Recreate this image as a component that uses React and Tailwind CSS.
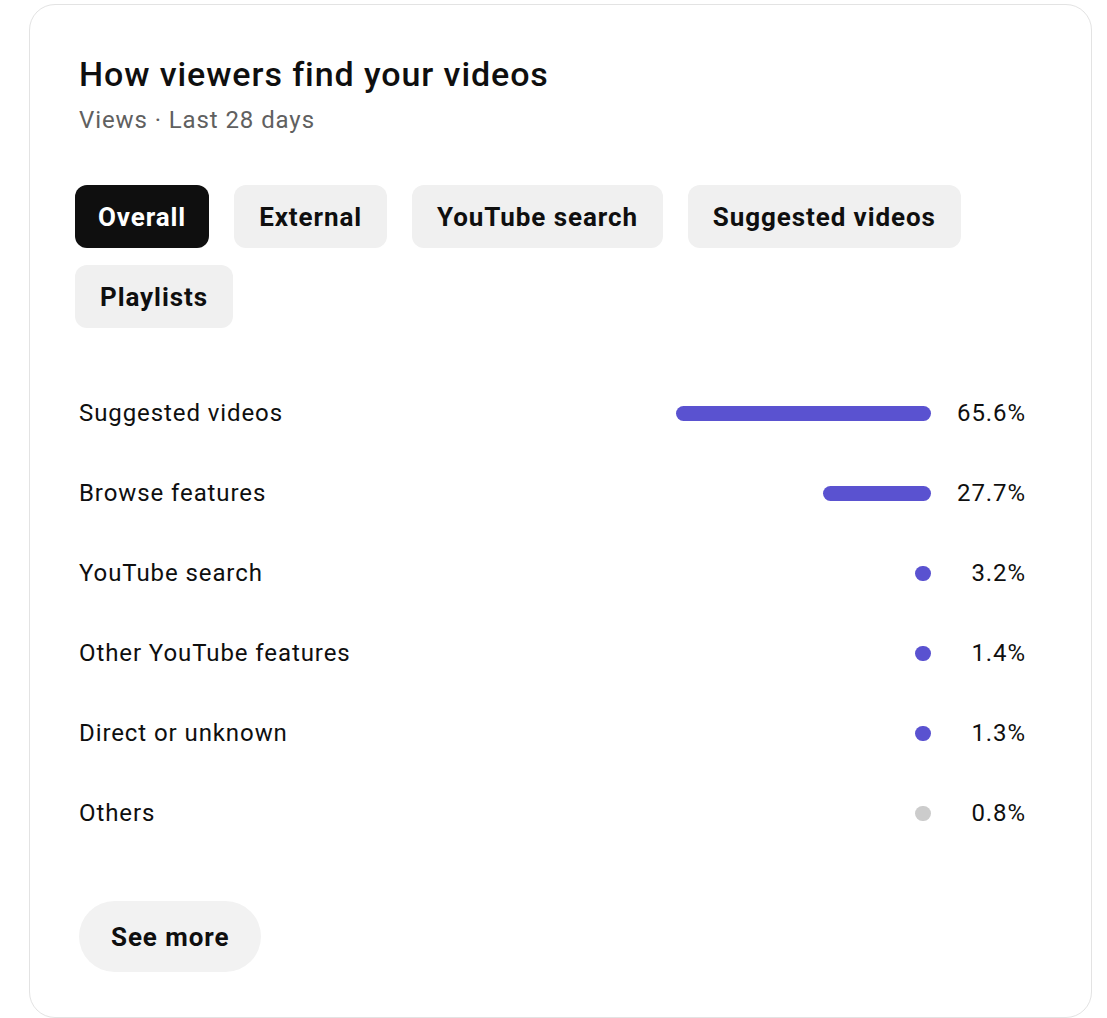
import React from "react";

const sources = [
  { name: "Suggested videos", pct: 65.6 },
  { name: "Browse features", pct: 27.7 },
  { name: "YouTube search", pct: 3.2 },
  { name: "Other YouTube features", pct: 1.4 },
  { name: "Direct or unknown", pct: 1.3 },
  { name: "Others", pct: 0.8, muted: true },
];

const tabs = ["Overall", "External", "YouTube search", "Suggested videos", "Playlists"];

export default function App() {
  return (
    <div className="min-h-[1018px] bg-white pt-[4px] pl-[29px] tracking-[0.057em]" style={{ fontFamily: "Roboto, 'Noto Sans', sans-serif" }}>
      <div className="w-[1063px] h-[1014px] border border-[#e3e3e3] rounded-[26px] pl-[49px] pr-[65px] pt-[50px]">
        {/* header */}
        <h2 className="text-[34px] leading-[38px] font-medium text-[#0f0f0f]">How viewers find your videos</h2>
        <p className="text-[24px] leading-[30px] text-[#606060] mt-[12px]">Views · Last 28 days</p>

        {/* tabs */}
        <div className="flex flex-wrap gap-x-[25px] gap-y-[17px] -ml-[4px] mt-[50px] w-[910px]">
          {tabs.map((t, i) => (
            <button
              key={t}
              className={
                i === 0
                  ? "h-[63px] px-[23px] rounded-[12px] bg-[#0f0f0f] text-white text-[26px] leading-[30px] font-bold"
                  : "h-[63px] px-[25px] rounded-[12px] bg-[#f0f0f0] text-[#0f0f0f] text-[26px] leading-[30px] font-bold"
              }
            >
              {t}
            </button>
          ))}
        </div>

        {/* rows */}
        <div className="mt-[45px] flex flex-col">
          {sources.map((s) => (
            <div key={s.name} className="h-[80px] flex items-center">
              <span className="flex-1 text-[24px] leading-[30px] text-[#0f0f0f]">{s.name}</span>
              <div className="w-[400px] flex justify-end">
                <div
                  className={s.muted ? "h-[15px] rounded-full bg-[#cccccc]" : "h-[15px] rounded-full bg-[#5a52d0]"}
                  style={{ width: Math.max(16, s.pct * 3.89) }}
                />
              </div>
              <span className="w-[95px] text-right text-[24px] leading-[30px] text-[#0f0f0f]">{s.pct}%</span>
            </div>
          ))}
        </div>

        <button className="mt-[48px] h-[71px] px-[32px] rounded-full bg-[#f2f2f2] text-[26px] leading-[30px] font-bold text-[#0f0f0f]">
          See more
        </button>
      </div>
    </div>
  );
}
